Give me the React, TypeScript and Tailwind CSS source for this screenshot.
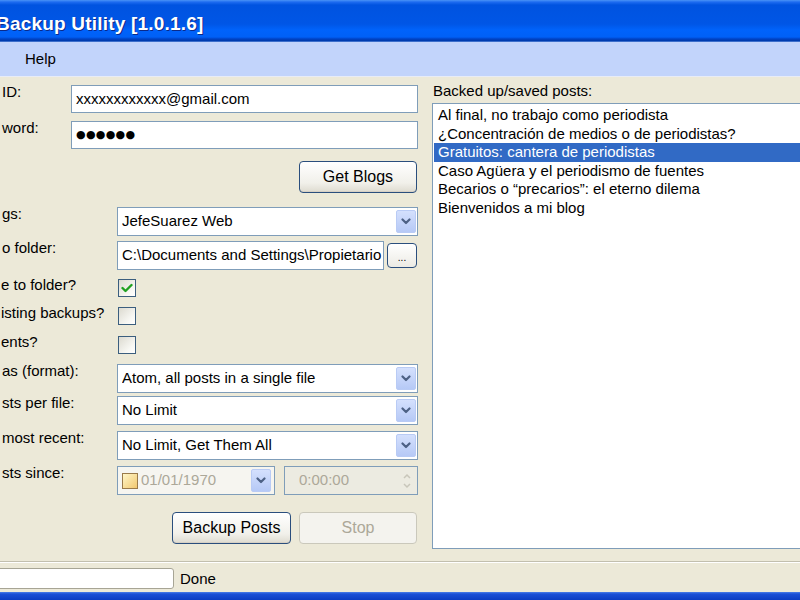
import React from 'react'

const posts = [
  'Al final, no trabajo como periodista',
  '¿Concentración de medios o de periodistas?',
  'Gratuitos: cantera de periodistas',
  'Caso Agüera y el periodismo de fuentes',
  'Becarios o “precarios”: el eterno dilema',
  'Bienvenidos a mi blog',
]

function Chevron({ color = '#4d6185' }: { color?: string }) {
  return (
    <svg width="10" height="7" viewBox="0 0 10 7">
      <path d="M1.5 1.5 L5 5 L8.5 1.5" fill="none" stroke={color} strokeWidth="2.2" strokeLinecap="round" strokeLinejoin="round" />
    </svg>
  )
}

function ArrowBox() {
  return (
    <div className="w-[20px] h-[23px] rounded-[2px] flex items-center justify-center border border-[#b9cbf5] bg-[linear-gradient(to_bottom,#d4e0fd,#b6c9f6)]">
      <Chevron />
    </div>
  )
}

function Combo({ text }: { text: string }) {
  return (
    <div className="flex-1 min-w-0 h-[29px] flex items-center border border-[#7f9db9] bg-white pl-[4px] pr-[1px]">
      <div className="flex-1 min-w-0 whitespace-nowrap overflow-hidden">{text}</div>
      <ArrowBox />
    </div>
  )
}

function TextBox({ children }: { children: React.ReactNode }) {
  return (
    <div className="flex-1 min-w-0 h-[28px] flex items-center border border-[#7f9db9] bg-white pl-[4px] overflow-hidden whitespace-nowrap">
      {children}
    </div>
  )
}

function XpButton({ label, width, disabled = false }: { label: string; width: string; disabled?: boolean }) {
  return (
    <div
      className={
        (disabled
          ? 'border-[#cac8bb] bg-[#f4f3ee] text-[#aca899] '
          : 'border-[#2a4e7d] bg-[linear-gradient(to_bottom,#ffffff,#f1f0ea_70%,#dedbd0)] text-black shadow-[inset_0_-1px_0_#d6d0c5] ') +
        width +
        ' h-[32px] border rounded-[4px] flex items-center justify-center text-[16px]'
      }
    >
      {label}
    </div>
  )
}

function Check({ checked = false }: { checked?: boolean }) {
  return (
    <div className="w-[18px] h-[18px] border border-[#3b5e7e] bg-[linear-gradient(135deg,#dcdad0,#f8f8f4_70%,#ffffff)] flex items-center justify-center">
      {checked && (
        <svg width="12" height="10" viewBox="0 0 12 10">
          <path d="M1.5 5 L4.5 8 L10.5 2" fill="none" stroke="#21a121" strokeWidth="2.4" strokeLinecap="round" strokeLinejoin="round" />
        </svg>
      )}
    </div>
  )
}

function Label({ text, w }: { text: string; w: string }) {
  return <div className={w + ' shrink-0 leading-[15px] -mt-[1px] pl-[2px] whitespace-nowrap'}>{text}</div>
}

function CheckRow({ text, checked = false, mt }: { text: string; checked?: boolean; mt: string }) {
  return (
    <div className={'flex items-start ' + mt}>
      <div className="w-[118px] shrink-0 leading-[15px] -mt-[2px] pl-[1px] whitespace-nowrap">{text}</div>
      <Check checked={checked} />
    </div>
  )
}

export default function App() {
  return (
    <div className="w-[800px] h-[600px] overflow-hidden flex flex-col font-['Liberation_Sans',Arial,sans-serif] text-[15px] text-black">
      {/* title bar */}
      <div className="h-[42px] shrink-0 flex items-center pt-[6px] bg-[linear-gradient(to_bottom,#4a93f6_0px,#1e6cf0_2px,#0053e0_5px,#0056e6_24px,#0063fb_30px,#0060f6_37px,#0042c4_39px,#003aa8_41px,#7aa4ee_42px)]">
        <div className="-ml-[4px] text-white font-bold text-[19px] leading-[22px] tracking-[0.2px] [text-shadow:1px_1px_0_#0a2a8a]">
          Backup Utility [1.0.1.6]
        </div>
      </div>

      {/* menu bar */}
      <div className="h-[35px] shrink-0 flex items-center bg-[#c2d4fb] border-b border-[#e8ecf6]">
        <div className="ml-[25px] mt-[1px]">Help</div>
      </div>

      {/* main */}
      <div className="h-[484px] shrink-0 flex bg-[#ece9d8]">
        <div className="w-[432px] shrink-0 flex flex-col pr-[14px]">
          <div className="flex items-start mt-[8px]">
            <Label text="ID:" w="w-[71px]" />
            <TextBox>xxxxxxxxxxxx@gmail.com</TextBox>
          </div>
          <div className="flex items-start mt-[8px]">
            <Label text="word:" w="w-[71px]" />
            <TextBox>
              <span className="font-['DejaVu_Sans',sans-serif] text-[11px] tracking-[0.3px]">●●●●●●</span>
            </TextBox>
          </div>
          <div className="self-end mt-[12px] mr-[1px]">
            <XpButton label="Get Blogs" width="w-[118px]" />
          </div>
          <div className="flex items-start mt-[14px]">
            <Label text="gs:" w="w-[117px]" />
            <Combo text="JefeSuarez Web" />
          </div>
          <div className="flex items-start mt-[5px]">
            <Label text="o folder:" w="w-[117px]" />
            <div className="flex-1 min-w-0 flex items-center gap-[3px]">
              <div className="flex-1 min-w-0 h-[29px] flex items-center border border-[#7f9db9] bg-white pl-[4px] overflow-hidden whitespace-nowrap">
                C:\Documents and Settings\Propietario
              </div>
              <div className="w-[30px] h-[25px] shrink-0 mr-[1px] rounded-[4px] border border-[#2a4e7d] bg-[linear-gradient(to_bottom,#ffffff,#ecebe4)] flex items-end justify-center pb-[4px] text-[10px] leading-none">
                ...
              </div>
            </div>
          </div>
          <CheckRow text="e to folder?" checked mt="mt-[9px]" />
          <CheckRow text="isting backups?" mt="mt-[10px]" />
          <CheckRow text="ents?" mt="mt-[11px]" />
          <div className="flex items-start mt-[10px]">
            <Label text="as (format):" w="w-[117px]" />
            <Combo text="Atom, all posts in a single file" />
          </div>
          <div className="flex items-start mt-[3px]">
            <Label text="sts per file:" w="w-[117px]" />
            <Combo text="No Limit" />
          </div>
          <div className="flex items-start mt-[6px]">
            <Label text="most recent:" w="w-[117px]" />
            <Combo text="No Limit, Get Them All" />
          </div>
          <div className="flex items-start mt-[6px]">
            <Label text="sts since:" w="w-[117px]" />
            <div className="flex-1 flex items-center gap-[9px]">
              <div className="w-[158px] h-[29px] flex items-center border border-[#7f9db9] bg-[#f6f5f0] pl-[4px] pr-[3px]">
                <div className="w-[16px] h-[16px] border border-[#9a7a4a] bg-[linear-gradient(135deg,#fff6c8,#f1c870)]" />
                <div className="flex-1 ml-[3px] text-[#aca899]">01/01/1970</div>
                <ArrowBox />
              </div>
              <div className="flex-1 h-[29px] flex items-center border border-[#7f9db9] bg-[#ecebe1] pl-[14px] pr-[5px]">
                <div className="flex-1 text-[#aca899]">0:00:00</div>
                <svg width="10" height="18" viewBox="0 0 10 18">
                  <path d="M2 6 L5 3 L8 6" fill="none" stroke="#c8c6ba" strokeWidth="1.5" />
                  <path d="M2 12 L5 15 L8 12" fill="none" stroke="#c8c6ba" strokeWidth="1.5" />
                </svg>
              </div>
            </div>
          </div>
          <div className="flex justify-end gap-[8px] mt-[17px] mr-[1px]">
            <XpButton label="Backup Posts" width="w-[119px]" />
            <XpButton label="Stop" width="w-[118px]" disabled />
          </div>
        </div>

        <div className="flex-1 flex flex-col pt-[6px]">
          <div className="leading-[15px] pl-[1px] whitespace-nowrap">Backed up/saved posts:</div>
          <div className="mt-[5px] w-[400px] h-[446px] border border-[#7f9db9] bg-white pt-[2px] pl-[1px]">
            {posts.map((p, i) => (
              <div
                key={i}
                className={
                  (i === 2 ? 'bg-[#316ac5] text-white ' : '') + 'h-[18.6px] leading-[18.6px] pl-[4px] whitespace-nowrap'
                }
              >
                {p}
              </div>
            ))}
          </div>
        </div>
      </div>

      {/* status bar */}
      <div className="h-[31px] shrink-0 flex items-start pt-[6px] bg-[#ece9d8] border-t border-[#c2bfae] shadow-[inset_0_1px_0_#ffffff]">
        <div className="w-[177px] h-[21px] -ml-[3px] rounded-[3px] border border-[#a7a595] bg-white shrink-0" />
        <div className="ml-[6px] leading-[21px]">Done</div>
      </div>

      {/* bottom window edge */}
      <div className="h-[8px] shrink-0 bg-[linear-gradient(to_bottom,#4a7ee8_0px,#1a4fd6_2px,#0b3cc2_8px)]" />
    </div>
  )
}
